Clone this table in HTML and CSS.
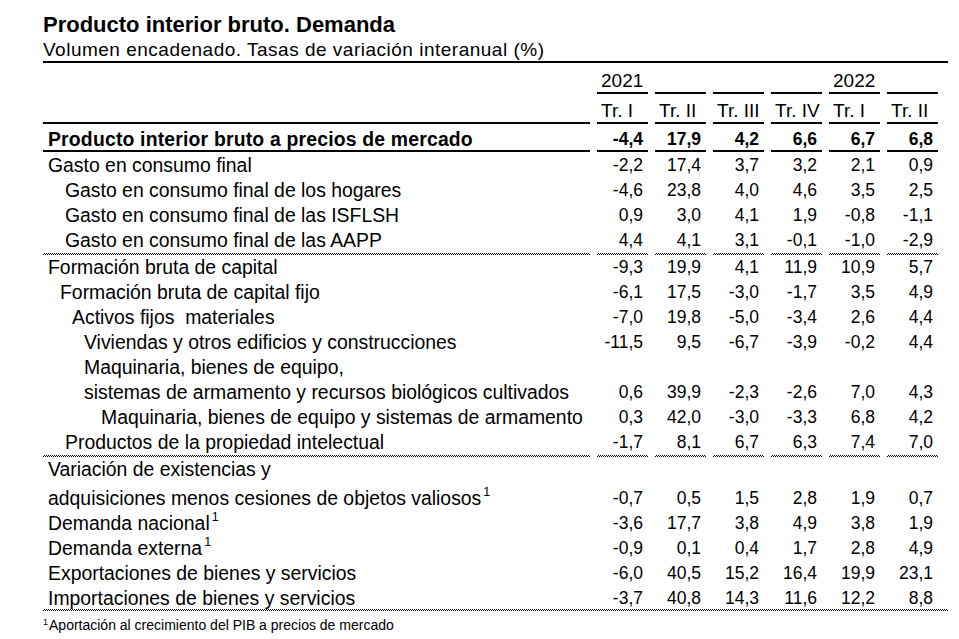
FILE: index.html
```html
<!DOCTYPE html>
<html lang="es">
<head>
<meta charset="utf-8">
<title>Producto interior bruto. Demanda</title>
<link rel="stylesheet" href="styles.css">
</head>
<body>
<div class="page">
  <h1 class="title">Producto interior bruto. Demanda</h1>
  <p class="subtitle">Volumen encadenado. Tasas de variación interanual (%)</p>
  <div class="table">
    <div class="row year">
      <div class="lab"></div>
      <div class="h">2021</div><div class="h"></div><div class="h"></div><div class="h"></div><div class="h">2022</div><div class="h"></div>
    </div>
    <div class="row tr">
      <div class="lab"></div>
      <div class="h">Tr. I</div><div class="h">Tr. II</div><div class="h">Tr. III</div><div class="h">Tr. IV</div><div class="h">Tr. I</div><div class="h">Tr. II</div>
    </div>
    <div class="row total">
      <div class="lab l0">Producto interior bruto a precios de mercado</div>
      <div class="n">-4,4</div><div class="n">17,9</div><div class="n">4,2</div><div class="n">6,6</div><div class="n">6,7</div><div class="n">6,8</div>
    </div>
    <div class="group g1">
      <div class="row">
        <div class="lab l0">Gasto en consumo final</div>
        <div class="n">-2,2</div><div class="n">17,4</div><div class="n">3,7</div><div class="n">3,2</div><div class="n">2,1</div><div class="n">0,9</div>
      </div>
      <div class="row">
        <div class="lab l1">Gasto en consumo final de los hogares</div>
        <div class="n">-4,6</div><div class="n">23,8</div><div class="n">4,0</div><div class="n">4,6</div><div class="n">3,5</div><div class="n">2,5</div>
      </div>
      <div class="row">
        <div class="lab l1">Gasto en consumo final de las ISFLSH</div>
        <div class="n">0,9</div><div class="n">3,0</div><div class="n">4,1</div><div class="n">1,9</div><div class="n">-0,8</div><div class="n">-1,1</div>
      </div>
      <div class="row dots">
        <div class="lab l1">Gasto en consumo final de las AAPP</div>
        <div class="n">4,4</div><div class="n">4,1</div><div class="n">3,1</div><div class="n">-0,1</div><div class="n">-1,0</div><div class="n">-2,9</div>
      </div>
    </div>
    <div class="group">
      <div class="row">
        <div class="lab l0">Formación bruta de capital</div>
        <div class="n">-9,3</div><div class="n">19,9</div><div class="n">4,1</div><div class="n">11,9</div><div class="n">10,9</div><div class="n">5,7</div>
      </div>
      <div class="row">
        <div class="lab lf">Formación bruta de capital fijo</div>
        <div class="n">-6,1</div><div class="n">17,5</div><div class="n">-3,0</div><div class="n">-1,7</div><div class="n">3,5</div><div class="n">4,9</div>
      </div>
      <div class="row">
        <div class="lab la">Activos fijos&nbsp; materiales</div>
        <div class="n">-7,0</div><div class="n">19,8</div><div class="n">-5,0</div><div class="n">-3,4</div><div class="n">2,6</div><div class="n">4,4</div>
      </div>
      <div class="row">
        <div class="lab lv">Viviendas y otros edificios y construcciones</div>
        <div class="n">-11,5</div><div class="n">9,5</div><div class="n">-6,7</div><div class="n">-3,9</div><div class="n">-0,2</div><div class="n">4,4</div>
      </div>
      <div class="row">
        <div class="lab lv">Maquinaria, bienes de equipo,</div>
        <div class="n"></div><div class="n"></div><div class="n"></div><div class="n"></div><div class="n"></div><div class="n"></div>
      </div>
      <div class="row">
        <div class="lab lv">sistemas de armamento y recursos biológicos cultivados</div>
        <div class="n">0,6</div><div class="n">39,9</div><div class="n">-2,3</div><div class="n">-2,6</div><div class="n">7,0</div><div class="n">4,3</div>
      </div>
      <div class="row">
        <div class="lab lm">Maquinaria, bienes de equipo y sistemas de armamento</div>
        <div class="n">0,3</div><div class="n">42,0</div><div class="n">-3,0</div><div class="n">-3,3</div><div class="n">6,8</div><div class="n">4,2</div>
      </div>
      <div class="row dots">
        <div class="lab l1">Productos de la propiedad intelectual</div>
        <div class="n">-1,7</div><div class="n">8,1</div><div class="n">6,7</div><div class="n">6,3</div><div class="n">7,4</div><div class="n">7,0</div>
      </div>
    </div>
    <div class="group">
      <div class="row">
        <div class="lab l0">Variación de existencias y</div>
        <div class="n"></div><div class="n"></div><div class="n"></div><div class="n"></div><div class="n"></div><div class="n"></div>
      </div>
      <div class="row tall">
        <div class="lab l0">adquisiciones menos cesiones de objetos valiosos<span class="sup">1</span></div>
        <div class="n">-0,7</div><div class="n">0,5</div><div class="n">1,5</div><div class="n">2,8</div><div class="n">1,9</div><div class="n">0,7</div>
      </div>
      <div class="row">
        <div class="lab l0">Demanda nacional<span class="sup">1</span></div>
        <div class="n">-3,6</div><div class="n">17,7</div><div class="n">3,8</div><div class="n">4,9</div><div class="n">3,8</div><div class="n">1,9</div>
      </div>
      <div class="row">
        <div class="lab l0">Demanda externa<span class="sup">1</span></div>
        <div class="n">-0,9</div><div class="n">0,1</div><div class="n">0,4</div><div class="n">1,7</div><div class="n">2,8</div><div class="n">4,9</div>
      </div>
      <div class="row">
        <div class="lab l0">Exportaciones de bienes y servicios</div>
        <div class="n">-6,0</div><div class="n">40,5</div><div class="n">15,2</div><div class="n">16,4</div><div class="n">19,9</div><div class="n">23,1</div>
      </div>
      <div class="row last">
        <div class="lab l0">Importaciones de bienes y servicios</div>
        <div class="n">-3,7</div><div class="n">40,8</div><div class="n">14,3</div><div class="n">11,6</div><div class="n">12,2</div><div class="n">8,8</div>
      </div>
    </div>
  </div>
  <p class="foot"><span class="fsup">1</span>Aportación al crecimiento del PIB a precios de mercado</p>
</div>
</body>
</html>
```

FILE: styles.css
```css
html, body {
  margin: 0;
  padding: 0;
  background: #fff;
}
body {
  font-family: "Liberation Sans", Arial, sans-serif;
  color: #000;
}
.page {
  padding: 12px 0 0 43px;
  width: 905px;
}
.title {
  margin: 0;
  font-size: 22px;
  line-height: 26px;
  font-weight: bold;
}
.subtitle {
  margin: 0;
  font-size: 19px;
  line-height: 23px;
  letter-spacing: 0.5px;
  border-bottom: 2px solid #000;
}
.table {
  width: 905px;
}
.row {
  display: grid;
  grid-template-columns: 547px repeat(6, 51px);
  column-gap: 7px;
  line-height: 25px;
}
.lab {
  font-size: 19.4px;
  white-space: nowrap;
}
.n {
  font-size: 17.5px;
  text-align: right;
  padding-right: 5px;
}
.h {
  font-size: 19px;
  padding-left: 4px;
  white-space: nowrap;
}
.year {
  padding-top: 6px;
  line-height: 23px;
}
.year .h {
  border-bottom: 2px solid #000;
}
.tr {
  padding-top: 5px;
  line-height: 23px;
}
.tr > div {
  border-bottom: 2px solid #000;
}
.total {
  padding-top: 5px;
  line-height: 21px;
  font-weight: bold;
}
.total .lab {
  letter-spacing: 0.18px;
}
.total > div {
  border-bottom: 2px solid #000;
}
.g1 {
  padding-top: 1px;
}
.dots > div {
  border-bottom: 2px solid transparent;
  background-image: repeating-conic-gradient(#000 0 25%, #fff 0 50%);
  background-size: 2px 2px;
  background-repeat: repeat-x;
  background-position: left bottom;
  background-origin: border-box;
}
.tall {
  padding-top: 4px;
}
.last {
  padding-top: 1px;
  line-height: 22px;
  border-bottom: 2px solid transparent;
  background-image: repeating-conic-gradient(#000 0 25%, #fff 0 50%);
  background-size: 2px 2px;
  background-repeat: repeat-x;
  background-position: left bottom;
  background-origin: border-box;
}
.l0 { padding-left: 5px; }
.l1 { padding-left: 22px; }
.lf { padding-left: 17px; }
.la { padding-left: 29px; }
.lv { padding-left: 41px; }
.lm { padding-left: 58px; }
.sup {
  font-size: 12.5px;
  line-height: 0;
  vertical-align: 9px;
  margin-left: 2px;
}
.foot {
  margin: 6px 0 0 0;
  font-size: 14px;
  line-height: 17px;
}
.fsup {
  font-size: 9px;
  line-height: 0;
  vertical-align: 5px;
  margin-right: 1px;
}
```
